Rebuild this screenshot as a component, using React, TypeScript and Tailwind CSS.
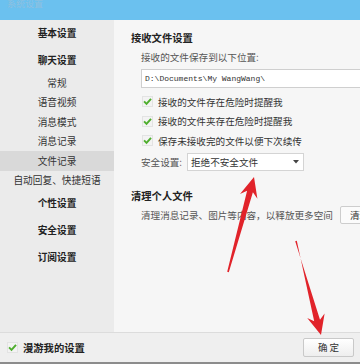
import React from "react";

const Check = () => (
  <span className="flex h-[11px] w-[11px] shrink-0 items-center justify-center border border-[#e3e3e3] bg-[#f3f3f3]">
    <svg width="10" height="9" viewBox="0 0 10 9">
      <path d="M1.2 4.4 L3.9 7.1 L8.9 1.5" fill="none" stroke="#4fae2e" strokeWidth="2.2" />
    </svg>
  </span>
);

const Arrows = () => (
  <svg className="pointer-events-none absolute left-0 top-0" width="360" height="364" viewBox="0 0 360 364">
    <polygon
      points="254,177 257.4,198.7 252.9,192.3 228.8,272.2 227.2,271.8 247.1,190.7 240,193.9"
      fill="#e1232a"
    />
    <polygon
      points="321,335 307.2,318 314.2,321.3 296.8,240.8 295.2,241.2 320,319.7 324.6,313.4"
      fill="#e1232a"
    />
  </svg>
);

export default function App() {
  return (
    <div className="relative h-[364px] w-[360px] overflow-hidden bg-[#f6f6f6] font-['Noto_Sans_CJK_SC',sans-serif] text-[#333]">
      {/* title bar */}
      <div className="flex h-[20px] items-start bg-[#6bc1ef] pl-[7px]">
        <span className="-mt-[2px] text-[9px] leading-[12px] text-[#8fc0df]">系统设置</span>
      </div>

      {/* middle */}
      <div className="flex h-[312px]">
        {/* sidebar */}
        <div className="flex w-[114px] shrink-0 flex-col bg-[#ebebeb] text-[9.7px]">
          <div className="flex h-[27px] items-center justify-center font-bold text-[#222]">基本设置</div>
          <div className="flex h-[26px] items-center justify-center font-bold text-[#222]">聊天设置</div>
          <div className="flex h-[19.6px] items-center justify-center">常规</div>
          <div className="flex h-[19.6px] items-center justify-center">语音视频</div>
          <div className="flex h-[19.6px] items-center justify-center">消息模式</div>
          <div className="flex h-[19.6px] items-center justify-center">消息记录</div>
          <div className="flex h-[19.6px] items-center justify-center bg-[#d9d9d9]">文件记录</div>
          <div className="flex h-[19.6px] items-center justify-center">自动回复、快捷短语</div>
          <div className="flex h-[26px] items-center justify-center font-bold text-[#222]">个性设置</div>
          <div className="flex h-[27px] items-center justify-center font-bold text-[#222]">安全设置</div>
          <div className="flex h-[28px] items-center justify-center font-bold text-[#222]">订阅设置</div>
        </div>

        {/* content */}
        <div className="flex-1 overflow-hidden bg-[#f6f6f6] pt-[8px] text-[9.6px]">
          <div className="flex h-[20px] items-center pl-[17px] text-[10.3px] font-bold text-[#222]">接收文件设置</div>
          <div className="pl-[27px]">
            <div className="flex h-[18px] items-center whitespace-nowrap text-[#555]">接收的文件保存到以下位置:</div>
            <div className="mt-[3px] flex h-[19px] w-[260px] items-center border border-[#cfcfcf] bg-white pl-[3px] font-['Liberation_Mono',monospace] text-[8px] text-[#333]">
              D:\Documents\My WangWang\
            </div>
            <div className="mt-[4px]">
              <div className="flex h-[19.5px] items-center gap-[5px] whitespace-nowrap pl-[1px]">
                <Check />
                <span>接收的文件存在危险时提醒我</span>
              </div>
              <div className="flex h-[19.5px] items-center gap-[5px] whitespace-nowrap pl-[1px]">
                <Check />
                <span>接收的文件夹存在危险时提醒我</span>
              </div>
              <div className="flex h-[19.5px] items-center gap-[5px] whitespace-nowrap pl-[1px]">
                <Check />
                <span>保存未接收完的文件以便下次续传</span>
              </div>
            </div>
            <div className="mt-[2.5px] flex h-[18px] items-center">
              <span className="w-[46px] shrink-0 whitespace-nowrap text-[#555]">安全设置:</span>
              <div className="flex h-[18px] w-[117px] items-center justify-between border border-[#d4d4d4] bg-white pl-[3px] pr-[4px]">
                <span>拒绝不安全文件</span>
                <svg width="6" height="4" viewBox="0 0 6 4">
                  <path d="M0 0 L6 0 L3 3.5 Z" fill="#444" />
                </svg>
              </div>
            </div>
          </div>
          <div className="mt-[15px] flex h-[20px] items-center pl-[17px] text-[10.3px] font-bold text-[#222]">清理个人文件</div>
          <div className="flex h-[18px] items-center gap-[7px] whitespace-nowrap pl-[27px]">
            <span className="text-[#555]">清理消息记录、图片等内容，以释放更多空间</span>
            <div className="flex h-[18px] w-[44px] shrink-0 items-center rounded-[2px] border border-[#cdcdcd] bg-[#fbfbfb] pl-[9px]">清理</div>
          </div>
        </div>
      </div>

      {/* bottom bar */}
      <div className="flex h-[30px] items-center justify-between border-t border-[#dcdcdc] bg-[#efefef] pl-[7px] pr-[6px]">
        <div className="flex items-center gap-[5px] text-[10.3px] font-bold text-[#222]">
          <Check />
          <span>漫游我的设置</span>
        </div>
        <div className="flex h-[19px] w-[51px] items-center justify-center rounded-[2px] border border-[#c9c9c9] bg-gradient-to-b from-[#ffffff] to-[#eeeeee] text-[9.5px] text-[#333]">
          确 定
        </div>
      </div>
      <div className="h-[2px] bg-[#8c8c8c]" />

      <Arrows />
    </div>
  );
}
